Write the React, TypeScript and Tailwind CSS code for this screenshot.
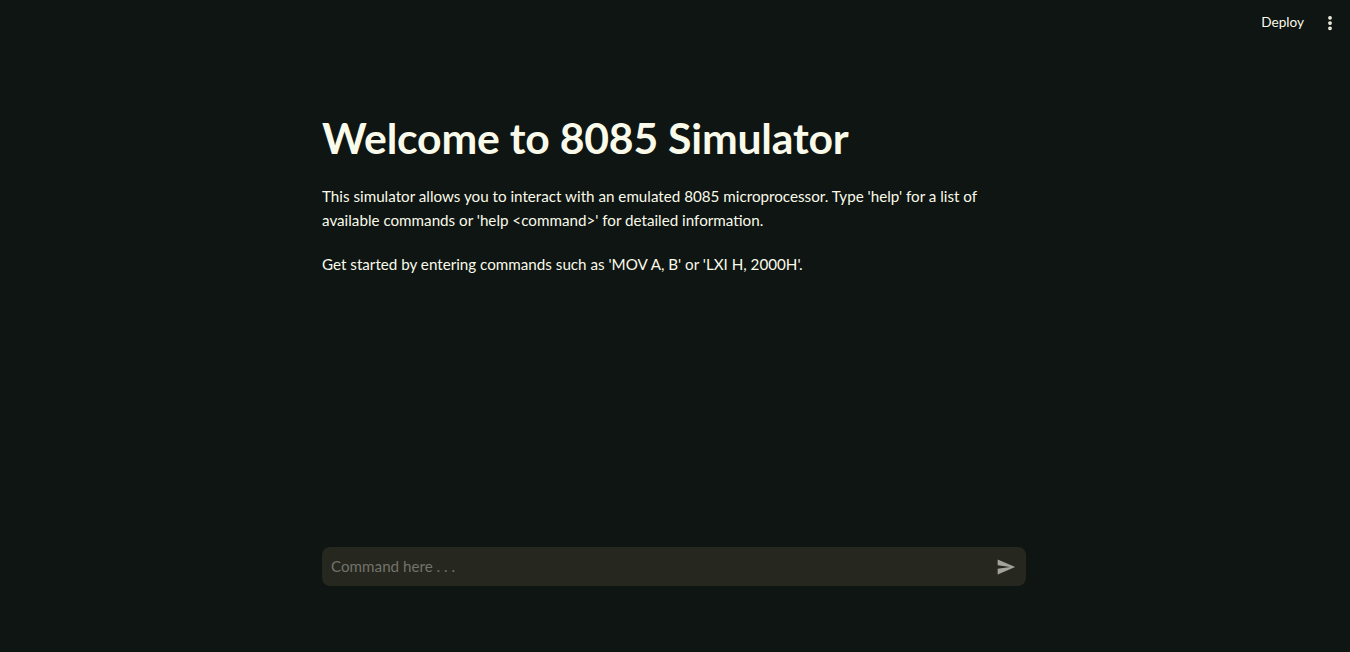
import { EllipsisVertical } from "lucide-react";

function SendIcon() {
  return (
    <svg viewBox="0 0 24 24" className="w-[20px] h-[20px]" fill="currentColor">
      <path d="M2.01 21L23 12 2.01 3 2 10l15 2-15 2z" />
    </svg>
  );
}

export default function App() {
  return (
    <div className="h-[652px] bg-[#0e1512] text-[#fafaea] font-['Lato','Liberation_Sans',sans-serif] flex flex-col">
      <header className="h-[45px] flex items-center justify-end gap-[9px] pr-[11px]">
        <button className="text-[13.6px] text-[#fafaea] px-[8px] py-[4px]">Deploy</button>
        <EllipsisVertical className="w-[18px] h-[18px] text-[#fafaea]" strokeWidth={3} />
      </header>

      <main className="flex-1 flex flex-col items-center pr-[2px]">
        <div className="w-[704px] pt-[67px]">
          <h1 className="text-[42.7px] leading-[52px] font-bold tracking-[-0.2px] mb-[20px]">
            Welcome to 8085 Simulator
          </h1>
          <p className="text-[15.2px] leading-[24px] mb-[20px]">
            This simulator allows you to interact with an emulated 8085 microprocessor. Type 'help' for a list of
            available commands or 'help &lt;command&gt;' for detailed information.
          </p>
          <p className="text-[15.2px] leading-[24px]">
            Get started by entering commands such as 'MOV A, B' or 'LXI H, 2000H'.
          </p>
        </div>
      </main>

      <footer className="flex justify-center pb-[66px] pr-[2px]">
        <div className="w-[704px] h-[39px] rounded-[8px] bg-[#26271f] flex items-center pl-[9px] pr-[10px]">
          <input
            className="flex-1 bg-transparent outline-none text-[15.2px] text-[#fafaea] placeholder:text-[#72736a]"
            placeholder="Command here . . ."
          />
          <span className="text-[#a3a39a]">
            <SendIcon />
          </span>
        </div>
      </footer>
    </div>
  );
}
